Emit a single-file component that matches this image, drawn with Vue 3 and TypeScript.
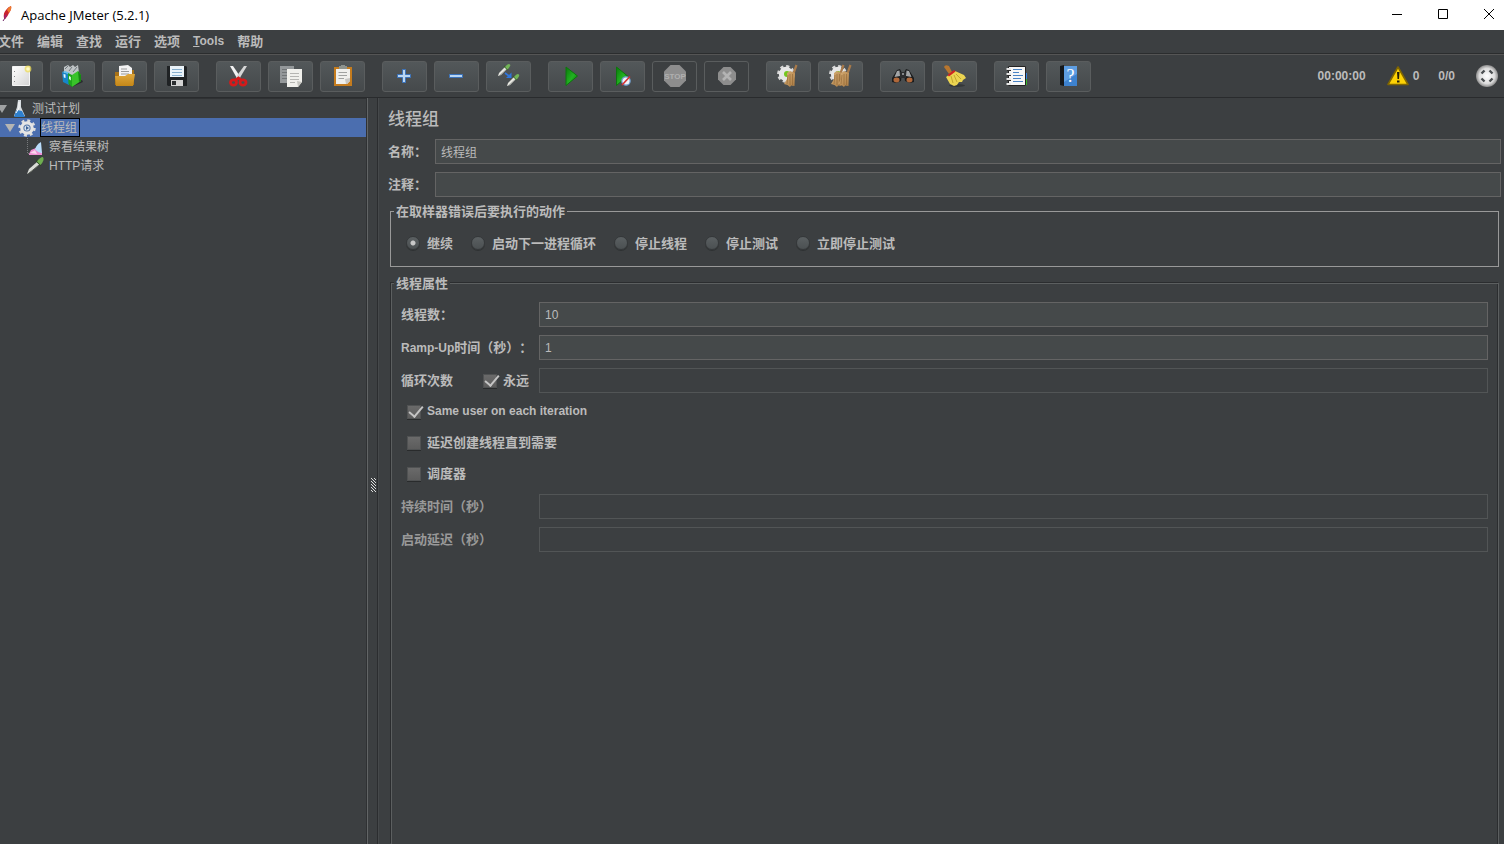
<script setup lang="ts">
import { ref } from 'vue'

interface MenuEntry {
  label: string
  latin?: boolean
}

const menus: MenuEntry[] = [
  { label: '文件' },
  { label: '编辑' },
  { label: '查找' },
  { label: '运行' },
  { label: '选项' },
  { label: 'Tools', latin: true },
  { label: '帮助' },
]

const errorActions = ['继续', '启动下一进程循环', '停止线程', '停止测试', '立即停止测试']
const action = ref('继续')

const name = ref('线程组')
const comment = ref('')
const threads = ref('10')
const rampUp = ref('1')
const forever = ref(true)
const loops = ref('')
const sameUser = ref(true)
const delayed = ref(false)
const scheduler = ref(false)
const duration = ref('')
const startDelay = ref('')
</script>

<template>
  <div class="window">
    <header class="titlebar">
      <svg class="feather" viewBox="0 0 14 18" aria-hidden="true">
        <path d="M4 14 Q3 9 6 6 Q8 3 11 2 Q12 5 9 9 Q8 12 5 15Z" fill="#c9232e" />
        <path d="M7 6 Q8 3 11 2 Q12 5 9 9Z" fill="#ee7b2c" />
        <path d="M4 13 Q4 11 6 10 L7 12 L5 15Z" fill="#a3236b" />
        <path d="M5 14 L3 17" stroke="#6d2463" stroke-width="1" />
      </svg>
      <h1>Apache JMeter (5.2.1)</h1>
      <div class="window-buttons">
        <button type="button" aria-label="Minimize">
          <svg viewBox="0 0 12 12"><path d="M1 5.5H11" /></svg>
        </button>
        <button type="button" aria-label="Maximize">
          <svg viewBox="0 0 12 12"><path d="M1.5 0.5H10.5V9.5H1.5Z" /></svg>
        </button>
        <button type="button" aria-label="Close">
          <svg viewBox="0 0 12 12"><path d="M1 0L11 10M11 0L1 10" /></svg>
        </button>
      </div>
    </header>

    <nav class="menubar">
      <button v-for="m in menus" :key="m.label" type="button" :class="{ latin: m.latin }">
        <template v-if="m.latin"><u>T</u>ools</template>
        <template v-else>{{ m.label }}</template>
      </button>
    </nav>

    <svg class="defs" aria-hidden="true">
      <defs>
        <linearGradient id="paper" x1="0" y1="0" x2="1" y2="1">
          <stop offset="0" stop-color="#ffffff" /><stop offset="1" stop-color="#d4d4d4" />
        </linearGradient>
        <linearGradient id="gold" x1="0" y1="0" x2="0" y2="1">
          <stop offset="0" stop-color="#e0a83c" /><stop offset="1" stop-color="#c48718" />
        </linearGradient>
        <linearGradient id="green" x1="0" y1="0" x2="1" y2="1">
          <stop offset="0" stop-color="#0a7a0a" /><stop offset="0.55" stop-color="#22b222" /><stop offset="1" stop-color="#036003" />
        </linearGradient>
        <linearGradient id="straw" x1="0" y1="0" x2="1" y2="1">
          <stop offset="0" stop-color="#d9b078" /><stop offset="1" stop-color="#a97a42" />
        </linearGradient>
        <radialGradient id="ball">
          <stop offset="0" stop-color="#ffffff" /><stop offset="0.7" stop-color="#dcdcdc" /><stop offset="1" stop-color="#8d8d8d" />
        </radialGradient>
        <g id="gear">
          <circle cx="10" cy="10" r="7.4" fill="none" stroke="#d8d8d8" stroke-width="3" stroke-dasharray="3.1 2.7" />
          <circle cx="10" cy="10" r="7.2" fill="#e6e6e6" />
        </g>
        <g id="broom">
          <path d="M11.5 0.5L13.5 1.5L10.5 10H8Z" fill="#a87a4a" />
          <path d="M3 9L6 7L11 9L10.5 22L7 21.5L6 23L3.5 21L0 20L3 15Z" fill="url(#straw)" />
          <path d="M4 11L3 20M6 10V21M8.5 10V21" stroke="#8f6534" stroke-width="0.6" />
        </g>
        <g id="pipette">
          <path d="M0 12L1 9L7 3L9 5L3 11Z" fill="#e6e6e0" />
          <path d="M1 12L9 5" stroke="#8a8f8a" stroke-width="0.8" />
          <path d="M6 2L10 6" stroke="#375c2c" stroke-width="1.2" />
          <path d="M7 3Q10-1 12 0.5Q13 2 9.5 5.5Z" fill="#73b557" />
        </g>
      </defs>
    </svg>

    <div class="toolbar" role="toolbar">
      <div class="group">
        <button type="button" aria-label="New">
          <svg viewBox="0 0 24 24">
            <path d="M4.5 2.5H21.5V21.5H4.5Z" fill="url(#paper)" stroke="#f4f4f4" />
            <path d="M6.5 7V8M6.5 12V13M6.5 17V18" stroke="#888" />
            <circle cx="20" cy="5" r="3.4" fill="#eedc5a" opacity="0.75" /><circle cx="20" cy="5" r="1.8" fill="#fffbc8" />
          </svg>
        </button>
        <button type="button" aria-label="Templates">
          <svg viewBox="0 0 24 24">
            <path d="M9 20L22 16L23 18L12 23Z" fill="#292c2d" />
            <path d="M4 3L8 1L10 3L13 1L15 3L18 1L19 9L12 13L4 9Z" fill="#bfc4c6" />
            <path d="M5 5L8 2M9 7L12 3M13 8L17 3" stroke="#6f787c" stroke-width="1" />
            <path d="M2 8L9 10V21L3 18Z" fill="#1685c9" /><path d="M2 8L5 7L10 9L9 10Z" fill="#5fc0f2" />
            <path d="M3.5 10L5.5 10.6V14L3.8 13.5Z" fill="#e6f5ff" />
            <path d="M8 9L12 11V23L8.5 20Z" fill="#1fa71c" /><path d="M12 11L18 7L21 11V17L12 23Z" fill="#39c32a" />
            <path d="M18 7L21 11V17L19 18Z" fill="#168a12" /><path d="M9 12L10.8 13V16.5L9 15Z" fill="#e7ffe0" />
          </svg>
        </button>
        <button type="button" aria-label="Open">
          <svg viewBox="0 0 24 24">
            <path d="M3 8H9L10 6H22V21H3Z" fill="#a87218" />
            <path d="M7 2L16 1L20 4V15H7Z" fill="#f3f3f3" />
            <path d="M9 5H15M9 7.5H17M9 10H17" stroke="#9b9b9b" />
            <path d="M3 12H13L16 10H23L21 22H4Z" fill="url(#gold)" />
          </svg>
        </button>
        <button type="button" aria-label="Save">
          <svg viewBox="0 0 24 24">
            <path d="M3 2H22L23 3V22H4L3 21Z" fill="#1f2224" />
            <path d="M6 2H20V13H6Z" fill="#e9f2f8" /><path d="M8 5.5H18M8 8.5H18M8 11.5H18" stroke="#86aecd" />
            <path d="M7 16H19V22H7Z" fill="#d3d3d3" /><path d="M8 17H12V21H8Z" fill="#2b2e30" />
          </svg>
        </button>
      </div>
      <div class="group">
        <button type="button" aria-label="Cut">
          <svg viewBox="0 0 24 24">
            <path d="M4 2L7 2L14.500 13L12 16Z" fill="#f2f2f2" /><path d="M21 2L18 2L10 13L12.500 16Z" fill="#d6d6d6" />
            <g fill="none" stroke="#d61a1a" stroke-width="2.8">
              <ellipse cx="7.500" cy="18.500" rx="3" ry="2.600" /><ellipse cx="17" cy="18.500" rx="3" ry="2.600" />
              <path d="M9 16.500L12.500 14L15.500 16.500" />
            </g>
          </svg>
        </button>
        <button type="button" aria-label="Copy">
          <svg viewBox="0 0 24 24">
            <path d="M2 2H16V19H2Z" fill="#94989a" /><path d="M4 5.5H13M4 8.5H13M4 11.5H13M4 14.5H13" stroke="#717577" />
            <path d="M9 5H24V18L20 23H9Z" fill="#f0f0ec" />
            <path d="M12 9.5H21M12 12.5H21M12 15.5H21M12 18.5H17" stroke="#b5b5b2" /><path d="M24 18L19 17L20 23Z" fill="#c5c5c0" />
          </svg>
        </button>
        <button type="button" aria-label="Paste">
          <svg viewBox="0 0 24 24">
            <path d="M4 3H22V22H4Z" fill="#c57c1e" /><path d="M6 5H20V17L17 20H6Z" fill="#efefec" />
            <path d="M9 4V2H11V1H15V2H17V5H9Z" fill="#8e938e" />
            <path d="M8.5 8.500H17M8.500 11.500H17M8.500 14.500H14" stroke="#a0a2a0" /><path d="M20 14L15 15L16 20H17L20 17Z" fill="#c8c8c5" />
          </svg>
        </button>
      </div>
      <div class="group">
        <button type="button" aria-label="Expand all">
          <svg viewBox="0 0 24 24"><path d="M10.500 5.500H13.500V10.500H18.500V13.500H13.500V18.500H10.500V13.500H5.500V10.500H10.500Z" fill="#b9d6f3" stroke="#3b73bb" /></svg>
        </button>
        <button type="button" aria-label="Collapse all">
          <svg viewBox="0 0 24 24"><path d="M5.500 10.500H18.500V13.500H5.500Z" fill="#b9d6f3" stroke="#3b73bb" /></svg>
        </button>
        <button type="button" aria-label="Toggle">
          <svg viewBox="0 0 24 24">
            <use href="#pipette" x="2" y="0" /><use href="#pipette" x="11" y="10" />
            <path d="M9 9L13 12" stroke="#2f76dd" stroke-width="1.6" /><path d="M15.500 8.500V14H10Z" fill="#2f76dd" />
          </svg>
        </button>
      </div>
      <div class="group">
        <button type="button" aria-label="Start">
          <svg viewBox="0 0 24 24"><path d="M8 3L19.500 12L8 21.500Z" fill="url(#green)" stroke="#0c760c" /></svg>
        </button>
        <button type="button" aria-label="Start no pauses">
          <svg viewBox="0 0 24 24">
            <path d="M6.500 3L17.500 12L6.500 21.500Z" fill="url(#green)" stroke="#0c760c" />
            <circle cx="16" cy="17" r="4.2" fill="#f0f4f9" stroke="#6d9ccc" stroke-width="1.2" />
            <path d="M12 21L20 12.5" stroke="#d42f2f" stroke-width="1.6" />
          </svg>
        </button>
        <button type="button" aria-label="Stop" disabled>
          <svg viewBox="0 0 24 24">
            <path d="M8.500 1H17.500L24 7.500V16.500L17.500 23H8.500L2 16.500V7.500Z" fill="#8d8d8d" />
            <text x="13" y="15" text-anchor="middle" class="stop">STOP</text>
          </svg>
        </button>
        <button type="button" aria-label="Shutdown" disabled>
          <svg viewBox="0 0 24 24">
            <path d="M9.500 3H16.500L22 8.500V15.500L16.500 21H9.500L4 15.500V8.500Z" fill="#8d8d8d" />
            <path d="M9 8L17 16M17 8L9 16" stroke="#b3b3b3" stroke-width="2.6" />
          </svg>
        </button>
      </div>
      <div class="group">
        <button type="button" aria-label="Clear">
          <svg viewBox="0 0 24 24">
            <use href="#gear" x="0" y="0" /><circle cx="11" cy="10" r="3" fill="#74c61e" />
            <use href="#broom" x="8" y="0" />
          </svg>
        </button>
        <button type="button" aria-label="Clear all">
          <svg viewBox="0 0 24 24">
            <use href="#gear" x="0" y="0" /><circle cx="10" cy="10" r="3" fill="#74c61e" />
            <use href="#broom" x="3" y="0" /><use href="#broom" x="10" y="0" />
          </svg>
        </button>
      </div>
      <div class="group">
        <button type="button" aria-label="Search">
          <svg viewBox="0 0 24 24">
            <path d="M7 6L10 5L12 9L11 17L6 19L2 18V14Z" fill="#1b1c1d" /><path d="M19 6L16 5L14 9L15 17L20 19L24 18V14Z" fill="#1b1c1d" />
            <path d="M10 8H16V14H10Z" fill="#2c2d2f" /><path d="M7 7L9.500 6.500L10 12L4.500 13ZM19 7L16.500 6.500L16 12L21.500 13Z" fill="#a2a5a7" />
            <ellipse cx="6.500" cy="16" rx="3" ry="2.400" fill="#b0683a" /><ellipse cx="19.500" cy="16" rx="3" ry="2.400" fill="#b0683a" />
            <path d="M12 9H14V11H12Z" fill="#85888a" />
          </svg>
        </button>
        <button type="button" aria-label="Reset search">
          <svg viewBox="0 0 24 24">
            <ellipse cx="15" cy="21.500" rx="8" ry="1.500" fill="#343738" />
            <path d="M2 3Q3 0 7 2L10 8L7 10Z" fill="#b7762f" />
            <path d="M8 10L13 7L22 11L24 14L21 16L20 18L17 18L15 21L12 22L8 20L4 13Z" fill="#ebd451" />
            <path d="M9 12L11 19M12 11L15 18M14 10L19 15" stroke="#b59a25" stroke-width="0.8" />
            <path d="M5.500 11L12 6L13.500 7.500L7 12.500Z" fill="#cf2323" />
          </svg>
        </button>
      </div>
      <div class="group">
        <button type="button" aria-label="Function helper">
          <svg viewBox="0 0 24 24">
            <path d="M20 9H23V15H20Z" fill="#2f7fe0" /><path d="M20 15H23V21H20Z" fill="#35b02a" />
            <path d="M4.500 2.500H21.500V21.500H4.500Z" fill="#f7f7f7" stroke="#232323" />
            <path d="M9 5.500H18M9 8.500H15M9 11.500H19M9 14.500H17M9 17.500H19" stroke="#4a83c4" />
            <path d="M2.500 5H7M2.500 10H7M2.500 15H7M2.500 20H7" stroke="#e6e6e6" stroke-width="2" />
            <path d="M3 6.500H7M3 11.500H7M3 16.500H7" stroke="#303030" />
          </svg>
        </button>
        <button type="button" aria-label="Help">
          <svg viewBox="0 0 24 24">
            <path d="M4 2L8 1V22L4 21Z" fill="#15181b" /><path d="M8 2H21V22H8Z" fill="#3d82cf" />
            <path d="M8 2H21V10L8 18Z" fill="#5e9ee2" />
            <text x="14.500" y="18" text-anchor="middle" class="question">?</text>
          </svg>
        </button>
      </div>
      <div class="status">
        <output class="elapsed">00:00:00</output>
        <svg class="warning" viewBox="0 0 22 20" aria-hidden="true">
          <path d="M11 1L21 18.500H1Z" fill="#fdd204" stroke="#806600" stroke-width="1.6" stroke-linejoin="round" />
          <path d="M10 6H12.500L12 13H10.500ZM10 14.500H12.500V16.500H10Z" fill="#241f08" />
        </svg>
        <output class="errors">0</output>
        <output class="running">0/0</output>
        <svg class="ball" viewBox="0 0 22 22" aria-hidden="true">
          <circle cx="11" cy="11" r="11" fill="url(#ball)" />
          <path
            d="M5.500 8.500L8.500 5.500M13.500 5.500L16.500 8.500M16.500 13.500L13.500 16.500M8.500 16.500L5.500 13.500"
            fill="none"
            stroke="#4b4f51"
            stroke-width="2.4"
          />
        </svg>
      </div>
    </div>

    <div class="body">
      <aside class="tree">
        <ul role="tree">
          <li role="treeitem" aria-expanded="true">
            <div class="row root">
              <svg class="arrow" viewBox="0 0 10 8"><path d="M0 0H10L5 8Z" fill="#a0a2a3" /></svg>
              <svg class="icon" viewBox="0 0 18 18">
                <path d="M8 0H11V7L15 16H4L7 7Z" fill="#d6dbdf" /><path d="M7 10L12 11L15 17H4L6 11Z" fill="#2e7fce" />
                <path d="M9 2V8L6 13" stroke="#ffffff" fill="none" />
              </svg>
              <span>测试计划</span>
            </div>
            <ul role="group">
              <li role="treeitem" aria-expanded="true" aria-selected="true">
                <div class="row child selected">
                  <svg class="arrow" viewBox="0 0 10 8"><path d="M0 0H10L5 8Z" fill="#b5b5b3" /></svg>
                  <svg class="icon" viewBox="0 0 18 18">
                    <circle cx="9" cy="9" r="7.2" fill="none" stroke="#dcdcdc" stroke-width="3" stroke-dasharray="2.83 2.83" />
                    <circle cx="9" cy="9" r="5.2" fill="#5274a6" stroke="#e5e5e5" stroke-width="3.2" />
                    <circle cx="9" cy="9" r="2.6" fill="#d7e2ee" /><path d="M8 7L11 9L8 11Z" fill="#3d6295" />
                  </svg>
                  <span class="focus">线程组</span>
                </div>
                <ul role="group">
                  <li role="treeitem">
                    <div class="row leaf">
                      <svg class="icon" viewBox="0 0 18 18">
                        <path d="M0.500 0V15.500H4" stroke="#777a7c" stroke-dasharray="1 1" fill="none" />
                        <path d="M2 16L4 12L9 10L12 13L15 14V17H2Z" fill="#ef8fd3" />
                        <path d="M8 11Q10 6 14 4L15 15Q11 15 8 11Z" fill="#b9dcfa" /><path d="M3 15L8 12L10 16Z" fill="#fbd5f0" />
                      </svg>
                      <span>察看结果树</span>
                    </div>
                  </li>
                  <li role="treeitem">
                    <div class="row leaf">
                      <svg class="icon" viewBox="0 0 18 18">
                        <path d="M0 17L2 12L10 5L12.500 7.500L5 14Z" fill="#d9dbd6" /><path d="M1 17L12 8" stroke="#555a52" />
                        <path d="M9 3.500L14 8.500" stroke="#28481e" stroke-width="1.4" /><path d="M10 4.500Q13 0 16 0Q18 3 13.500 8Z" fill="#6fae50" />
                      </svg>
                      <span>HTTP请求</span>
                    </div>
                  </li>
                </ul>
              </li>
            </ul>
          </li>
        </ul>
      </aside>

      <div class="splitter" role="separator" aria-orientation="vertical">
        <svg viewBox="0 0 5 16" aria-hidden="true">
          <path
            d="M0 1.500H1M3 1.500H4M1 2.500H2M4 2.500H5M2 3.500H3M0 4.500H1M3 4.500H4M1 5.500H2M4 5.500H5M2 6.500H3M0 7.500H1M3 7.500H4M1 8.500H2M4 8.500H5M2 9.500H3M0 10.500H1M3 10.500H4M1 11.500H2M4 11.500H5M2 12.500H3M0 13.500H1M3 13.500H4M1 14.500H2M4 14.500H5"
            stroke="#dddddd"
          />
        </svg>
      </div>

      <main class="panel">
        <h2>线程组</h2>
        <div class="field">
          <label for="name">名称：</label>
          <input id="name" v-model="name" type="text" />
        </div>
        <div class="field">
          <label for="comment">注释：</label>
          <input id="comment" v-model="comment" type="text" />
        </div>

        <fieldset class="actions">
          <legend>在取样器错误后要执行的动作</legend>
          <div class="radios">
            <label v-for="a in errorActions" :key="a">
              <input v-model="action" type="radio" name="action" :value="a" />
              <span>{{ a }}</span>
            </label>
          </div>
        </fieldset>

        <fieldset class="properties">
          <legend>线程属性</legend>
          <div class="field">
            <label for="threads">线程数：</label>
            <input id="threads" v-model="threads" type="text" />
          </div>
          <div class="field">
            <label for="ramp"><span class="latin">Ramp-Up</span>时间（秒）：</label>
            <input id="ramp" v-model="rampUp" type="text" />
          </div>
          <div class="field">
            <div class="loop">
              <label for="loops">循环次数</label>
              <label class="check"><input v-model="forever" type="checkbox" /><span>永远</span></label>
            </div>
            <input id="loops" v-model="loops" type="text" :disabled="forever" />
          </div>
          <div class="checks">
            <label class="check"><input v-model="sameUser" type="checkbox" /><span class="latin">Same user on each iteration</span></label>
            <label class="check"><input v-model="delayed" type="checkbox" /><span>延迟创建线程直到需要</span></label>
            <label class="check"><input v-model="scheduler" type="checkbox" /><span>调度器</span></label>
          </div>
          <div class="field off">
            <label for="duration">持续时间（秒）</label>
            <input id="duration" v-model="duration" type="text" :disabled="!scheduler" />
          </div>
          <div class="field off">
            <label for="delay">启动延迟（秒）</label>
            <input id="delay" v-model="startDelay" type="text" :disabled="!scheduler" />
          </div>
        </fieldset>
      </main>
    </div>
  </div>
</template>

<style>
body {
  background: #3c3f41;
  overflow: hidden;
}
</style>

<style scoped>
* {
  box-sizing: border-box;
}
.window {
  display: flex;
  flex-direction: column;
  height: 100vh;
  overflow: hidden;
  background: #3c3f41;
  color: #bbbbbb;
  font: bold 13px/17px "Liberation Sans", "Noto Sans CJK SC", sans-serif;
}
button {
  font: inherit;
  color: inherit;
  border: 0;
  background: none;
  padding: 0;
}
.latin {
  font-size: 12px;
}
.defs {
  position: absolute;
  width: 0;
  height: 0;
}
.titlebar {
  display: flex;
  align-items: center;
  flex: none;
  height: 30px;
  background: #ffffff;
  color: #000000;
}
.feather {
  width: 14px;
  height: 18px;
  margin: 0 7px 4px 0;
}
.titlebar h1 {
  margin: 0;
  font: 13px/17px "Open Sans", "Noto Sans", sans-serif;
}
.window-buttons {
  display: flex;
  margin-left: auto;
  margin-right: -8px;
}
.window-buttons button {
  display: flex;
  align-items: center;
  justify-content: center;
  width: 46px;
  height: 28px;
}
.window-buttons svg {
  width: 12px;
  height: 12px;
  fill: none;
  stroke: #000000;
}
.menubar {
  display: flex;
  gap: 13px;
  flex: none;
  height: 25px;
  margin-left: -2px;
  padding-bottom: 2px;
  border-bottom: 1px solid #555555;
  box-shadow: inset 0 -1px #2b2d2e;
}
.toolbar {
  display: flex;
  align-items: center;
  gap: 17px;
  flex: none;
  height: 43px;
  margin-left: -2px;
  border-bottom: 1px solid #292b2d;
}
.group {
  display: flex;
  gap: 7px;
}
.group button {
  display: flex;
  align-items: flex-start;
  width: 45px;
  height: 31px;
  padding: 2px 0 0 9px;
  border: 1px solid #5a5d5e;
  border-radius: 3px;
  background: linear-gradient(#53585a, #45494b);
}
.group button:disabled {
  background: none;
}
.group svg {
  width: 24px;
  height: 24px;
}
.stop {
  font: bold 8px "Liberation Sans", sans-serif;
  fill: #b0b0b0;
}
.question {
  font: 18px "Liberation Serif", serif;
  fill: #ffffff;
}
.status {
  display: flex;
  align-items: center;
  margin-left: auto;
  padding-right: 6px;
  font-size: 12px;
}
.warning {
  width: 22px;
  height: 20px;
  margin: 0 4px 0 21px;
}
.running {
  margin: 0 21px 0 19px;
}
.ball {
  width: 22px;
  height: 22px;
}
.body {
  display: flex;
  flex: 1;
  min-height: 0;
}
.tree {
  flex: none;
  width: 368px;
  padding-top: 1px;
  border-right: 1px solid #626566;
  box-shadow: inset -1px 0 #2f3133, inset 0 1px #2f3133;
  font-weight: normal;
  font-size: 12px;
}
.tree ul {
  margin: 0;
  padding: 0;
  list-style: none;
}
.row {
  display: flex;
  align-items: center;
  height: 19px;
  margin-right: 1px;
}
.row span {
  height: 19px;
  padding-top: 2px;
}
.arrow {
  width: 10px;
  height: 8px;
  margin-right: 3px;
}
.icon {
  width: 18px;
  height: 18px;
  margin-right: 4px;
}
.root {
  margin-left: -3px;
}
.child {
  padding-left: 5px;
}
.leaf {
  padding-left: 27px;
}
.selected {
  background: #4b6eaf;
}
.row .focus {
  padding: 1px 2px 0 0;
  border: 1px solid #000000;
}
.splitter {
  display: flex;
  align-items: center;
  justify-content: center;
  flex: none;
  width: 11px;
  padding-top: 28px;
  border-right: 1px solid #46494b;
  box-shadow: inset -1px 0 #2b2d2f;
}
.splitter svg {
  width: 5px;
  height: 16px;
}
.panel {
  display: flex;
  flex-direction: column;
  flex: 1;
  min-width: 0;
  padding: 9px 3px 0 9px;
  text-spacing-trim: space-all;
}
h2 {
  margin: 0 0 7px;
  font-size: 17px;
  line-height: 25px;
  font-weight: 500;
}
.field {
  display: flex;
  align-items: center;
  margin-bottom: 8px;
}
.field > label,
.loop {
  flex: none;
  width: 47px;
  white-space: nowrap;
}
.properties .field > label,
.loop {
  width: 138px;
}
.field > input {
  flex: 1;
  min-width: 0;
  height: 25px;
  padding: 0 5px;
  border: 1px solid #646464;
  border-radius: 0;
  outline: 0;
  background: #45494a;
  color: #bbbbbb;
  font: 12px/17px "Liberation Sans", "Noto Sans CJK SC", sans-serif;
}
.field > input:disabled {
  border-color: #525556;
  background: #3c3f41;
}
.off {
  color: #999999;
}
fieldset {
  min-width: 0;
  margin: 0 2px;
}
legend {
  height: 17px;
  padding: 0 2px;
  background: #3c3f41;
}
.actions {
  margin-top: -2px;
  padding: 11px 15px;
  border: 1px solid #999999;
}
.actions legend {
  margin-left: -12px;
}
.radios {
  display: flex;
  gap: 18px;
  height: 24px;
}
.radios label {
  display: flex;
  align-items: center;
  gap: 7px;
}
.radios input {
  appearance: none;
  width: 14px;
  height: 14px;
  margin: 0;
  border: 1px solid #35383a;
  border-radius: 50%;
  background: linear-gradient(#5b6062, #4b5052);
  box-shadow: 0 1px #2f3233;
}
.radios input:checked {
  background: radial-gradient(circle, #c8c8c8 2px, transparent 3px), linear-gradient(#5b6062, #4b5052);
}
.properties {
  flex: 1;
  margin-top: 8px;
  margin-left: 3px;
  padding: 10px 10px 0 9px;
  border: 1px solid #5c5f60;
  border-bottom: 0;
  box-shadow: -1px -1px #2b2d2f, inset -1px 0 #2b2d2f;
}
.properties legend {
  margin-left: -7px;
}
.loop {
  display: flex;
  justify-content: space-between;
  padding-right: 10px;
}
.check {
  display: flex;
  align-items: center;
  gap: 6px;
}
.check input {
  appearance: none;
  width: 14px;
  height: 14px;
  margin: 0;
  border: 1px solid #505253;
  background: linear-gradient(#6a6a6a, #5c5c5c);
  box-shadow: 0 1px #292b2c;
}
.check input:checked {
  position: relative;
}
.check input:checked::after {
  content: "";
  position: absolute;
  left: 4px;
  top: -3px;
  width: 6px;
  height: 12px;
  border: solid #c4c4c4;
  border-width: 0 2px 2px 0;
  transform: rotate(40deg);
}
.checks {
  display: flex;
  flex-direction: column;
  margin-top: -5px;
  padding: 0 6px 5px;
}
.checks .check {
  height: 31px;
}
</style>
